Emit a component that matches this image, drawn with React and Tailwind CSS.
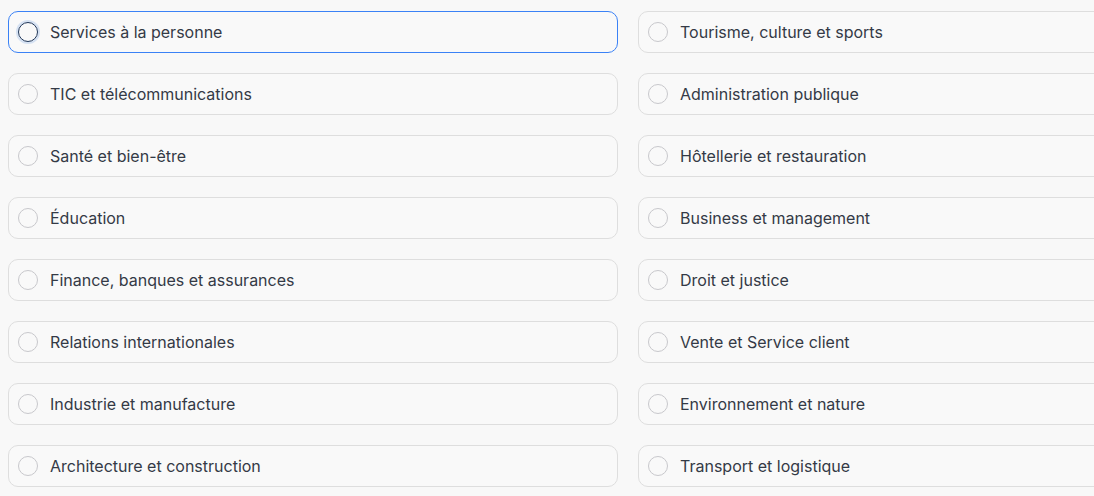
import React from "react";

const left = [
  "Services à la personne",
  "TIC et télécommunications",
  "Santé et bien-être",
  "Éducation",
  "Finance, banques et assurances",
  "Relations internationales",
  "Industrie et manufacture",
  "Architecture et construction",
];
const right = [
  "Tourisme, culture et sports",
  "Administration publique",
  "Hôtellerie et restauration",
  "Business et management",
  "Droit et justice",
  "Vente et Service client",
  "Environnement et nature",
  "Transport et logistique",
];

function Option({ label, active }) {
  return (
    <label
      className={
        "flex h-[42px] items-center rounded-[10px] border bg-[#f9f9f9] pl-[9px] " +
        (active ? "border-[#3b82f6]" : "border-[#dedede]")
      }
    >
      <span
        className={
          "block h-[20px] w-[20px] shrink-0 rounded-full " +
          (active
            ? "border-[1.5px] border-[#1e3558] shadow-[0_0_0_2px_rgba(147,180,230,0.35)]"
            : "border border-[#c8c8cc]")
        }
      />
      <span className="ml-[12px] text-[16px] leading-none text-[#343a46]">{label}</span>
    </label>
  );
}

export default function App() {
  const rows = [];
  for (let i = 0; i < left.length; i++) {
    rows.push(<Option key={"l" + i} label={left[i]} active={i === 0} />);
    rows.push(<Option key={"r" + i} label={right[i]} />);
  }
  return (
    <div
      className="h-[496px] w-[1094px] overflow-hidden bg-[#f8f8f8]"
      style={{ fontFamily: "Inter, 'Noto Sans', sans-serif" }}
    >
      <div className="grid w-[1240px] grid-cols-[610px_610px] gap-x-[20px] gap-y-[20px] pl-[8px] pt-[11px]">
        {rows}
      </div>
    </div>
  );
}
